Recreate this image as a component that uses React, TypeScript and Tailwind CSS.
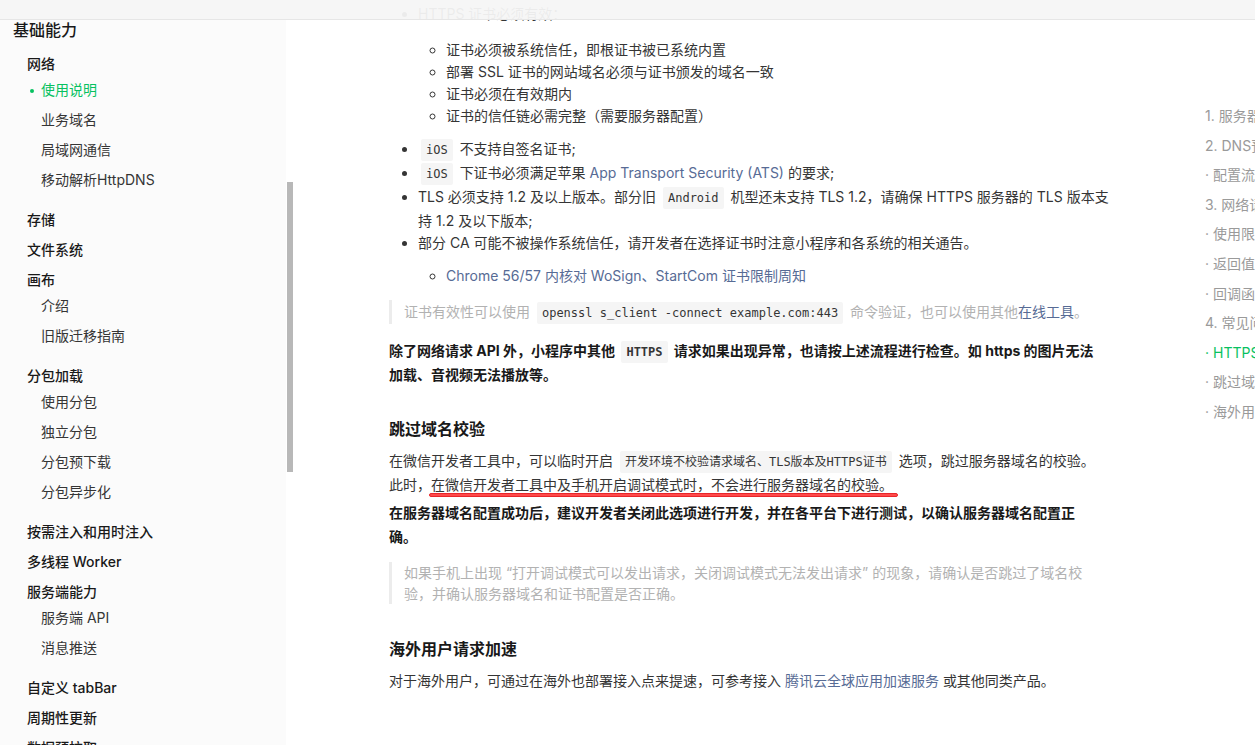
import React from "react";

type Group = { title: string; children?: { label: string; active?: boolean }[] };

const groups: Group[] = [
  {
    title: "网络",
    children: [
      { label: "使用说明", active: true },
      { label: "业务域名" },
      { label: "局域网通信" },
      { label: "移动解析HttpDNS" },
    ],
  },
  { title: "存储" },
  { title: "文件系统" },
  { title: "画布", children: [{ label: "介绍" }, { label: "旧版迁移指南" }] },
  {
    title: "分包加载",
    children: [{ label: "使用分包" }, { label: "独立分包" }, { label: "分包预下载" }, { label: "分包异步化" }],
  },
  { title: "按需注入和用时注入" },
  { title: "多线程 Worker" },
  { title: "服务端能力", children: [{ label: "服务端 API" }, { label: "消息推送" }] },
  { title: "自定义 tabBar" },
  { title: "周期性更新" },
  { title: "数据预拉取" },
];

const toc: { label: string; active?: boolean }[] = [
  { label: "1. 服务器域名配置" },
  { label: "2. DNS预解析域名" },
  { label: "· 配置流程" },
  { label: "3. 网络请求" },
  { label: "· 使用限制" },
  { label: "· 返回值" },
  { label: "· 回调函数" },
  { label: "4. 常见问题" },
  { label: "· HTTPS 证书", active: true },
  { label: "· 跳过域名校验" },
  { label: "· 海外用户请求加速" },
];

function Code({ children, bold }: { children: React.ReactNode; bold?: boolean }) {
  return (
    <code
      className={
        "mx-[3px] rounded-[2px] bg-[#f5f5f5] px-[5px] py-[4px] font-['DejaVu_Sans_Mono','Noto_Sans_CJK_SC',monospace] text-[12px] leading-none text-[#353535] " +
        (bold ? "font-bold" : "font-normal")
      }
    >
      {children}
    </code>
  );
}

function Link({ children }: { children: React.ReactNode }) {
  return <span className="text-[#576b95]">{children}</span>;
}

export default function App() {
  return (
    <div className="relative h-[745px] w-[1255px] overflow-hidden bg-white font-['Inter','Noto_Sans_CJK_SC',sans-serif] text-[14px] text-[#353535]">
      <div className="flex h-full">
        {/* Sidebar */}
        <aside className="w-[286px] shrink-0 bg-[#fbfbfb] pl-[13px] pt-[15px]">
          <div className="h-[30px] text-[16px] font-medium leading-[30px] text-[#191919]">基础能力</div>
          <ul className="mt-[4px] pl-[14px]">
            {groups.map((g) => (
              <li key={g.title}>
                <div className="h-[30px] font-medium leading-[30px] text-[#191919]">{g.title}</div>
                {g.children && (
                  <ul className="-mt-[4px] mb-[10px] pl-[14px]">
                    {g.children.map((c) => (
                      <li
                        key={c.label}
                        className={"h-[30px] leading-[30px] " + (c.active ? "text-[#07c160]" : "text-[#353535]")}
                      >
                        {c.active && (
                          <span className="-ml-[11px] mr-[7px] inline-block h-[4px] w-[4px] rounded-full bg-[#07c160] align-middle" />
                        )}
                        {c.label}
                      </li>
                    ))}
                  </ul>
                )}
              </li>
            ))}
          </ul>
        </aside>

        {/* Scrollbar */}
        <div className="w-[8px] shrink-0 pl-[1px]">
          <div className="mt-[182px] h-[290px] w-[6px] bg-[#b8b8b8]" />
        </div>

        {/* Main content */}
        <main className="ml-[95px] w-[720px] shrink-0 pt-[2px] leading-6">
          <ul className="list-disc pl-[29px]">
            <li>
              HTTPS 证书必须有效：
              <ul className="mt-[13px] list-[circle] pl-[28px] leading-[22px]">
                <li>证书必须被系统信任，即根证书被已系统内置</li>
                <li>部署 SSL 证书的网站域名必须与证书颁发的域名一致</li>
                <li>证书必须在有效期内</li>
                <li>证书的信任链必需完整（需要服务器配置）</li>
              </ul>
            </li>
            <li className="mt-[10px]">
              <Code>iOS</Code> 不支持自签名证书;
            </li>
            <li>
              <Code>iOS</Code> 下证书必须满足苹果 <Link>App Transport Security (ATS)</Link> 的要求;
            </li>
            <li>
              TLS 必须支持 1.2 及以上版本。部分旧 <Code>Android</Code> 机型还未支持 TLS 1.2，请确保 HTTPS 服务器的 TLS 版本支持 1.2 及以下版本;
            </li>
            <li className="-mt-[2px]">
              部分 CA 可能不被操作系统信任，请开发者在选择证书时注意小程序和各系统的相关通告。
              <ul className="mt-[10px] list-[circle] pl-[28px] leading-[22px]">
                <li>
                  <Link>Chrome 56/57 内核对 WoSign、StartCom 证书限制周知</Link>
                </li>
              </ul>
            </li>
          </ul>

          <blockquote className="mt-[13px] border-l-[3px] border-[#ececec] pl-[12px] text-[#b2b2b2]">
            证书有效性可以使用 <Code>openssl s_client -connect example.com:443</Code> 命令验证，也可以使用其他
            <Link>在线工具</Link>。
          </blockquote>

          <p className="mt-[15px] font-bold text-[#191919]">
            除了网络请求 API 外，小程序中其他 <Code bold>HTTPS</Code> 请求如果出现异常，也请按上述流程进行检查。如 https 的图片无法
            <br />
            加载、音视频无法播放等。
          </p>

          <h3 className="mt-[30px] text-[16px] font-bold leading-6 text-[#191919]">跳过域名校验</h3>
          <p className="mt-[8px]">
            在微信开发者工具中，可以临时开启 <Code>开发环境不校验请求域名、TLS版本及HTTPS证书</Code> 选项，跳过服务器域名的校验。
            <br />
            此时，
            <span className="relative">
              在微信开发者工具中及手机开启调试模式时，不会进行服务器域名的校验。
              <span className="absolute -left-[2px] -right-[5px] -bottom-[4px] h-[4px] rounded-full border border-[#e8262b] bg-[#ff4a4a]" />
            </span>
          </p>
          <p className="mt-[4px] font-bold text-[#191919]">
            在服务器域名配置成功后，建议开发者关闭此选项进行开发，并在各平台下进行测试，以确认服务器域名配置正
            <br />
            确。
          </p>

          <blockquote className="mt-[13px] border-l-[3px] border-[#ececec] pl-[12px] leading-[21px] text-[#b2b2b2]">
            如果手机上出现 “打开调试模式可以发出请求，关闭调试模式无法发出请求” 的现象，请确认是否跳过了域名校
            <br />
            验，并确认服务器域名和证书配置是否正确。
          </blockquote>

          <h3 className="mt-[33px] text-[16px] font-bold leading-6 text-[#191919]">海外用户请求加速</h3>
          <p className="mt-[8px]">
            对于海外用户，可通过在海外也部署接入点来提速，可参考接入 <Link>腾讯云全球应用加速服务</Link> 或其他同类产品。
          </p>
        </main>

        {/* Right TOC */}
        <nav className="ml-[96px] min-w-0 flex-1 overflow-hidden pt-[101px]">
          <ul>
            {toc.map((t) => (
              <li
                key={t.label}
                className={
                  "h-[29.6px] whitespace-nowrap leading-[29.6px] " + (t.active ? "text-[#07c160]" : "text-[#9a9a9a]")
                }
              >
                {t.label}
              </li>
            ))}
          </ul>
        </nav>
      </div>

      {/* Top bar overlay */}
      <div className="absolute inset-x-0 top-0 h-[20px] border-b border-[#e6e6e6] bg-[#f5f5f5]/95" />
    </div>
  );
}
